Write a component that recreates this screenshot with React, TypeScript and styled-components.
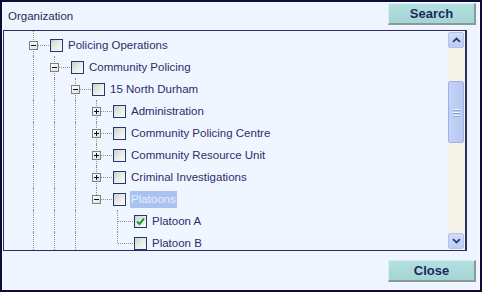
import React from 'react';
import styled, { createGlobalStyle, css } from 'styled-components';

const GlobalStyle = createGlobalStyle`
	html, body {
		margin: 0;
		padding: 0;
		background: #eef5fe;
	}
	body {
		font-family: "Liberation Sans", Arial, sans-serif;
	}
`;

const ROW_H = 22;
const INDENT = 21;
const LINE = '#8e8e8e';

interface INode {
	label: string;
	level: number;
	hasNext: boolean;
	state: 'open' | 'closed' | 'leaf';
	checked?: boolean;
	selected?: boolean;
	guides: boolean[];
}

const nodes: INode[] = [
	{ label: 'Policing Operations', level: 0, hasNext: true, state: 'open', guides: [] },
	{ label: 'Community Policing', level: 1, hasNext: true, state: 'open', guides: [true] },
	{ label: '15 North Durham', level: 2, hasNext: true, state: 'open', guides: [true, true] },
	{ label: 'Administration', level: 3, hasNext: true, state: 'closed', guides: [true, true, true] },
	{ label: 'Community Policing Centre', level: 3, hasNext: true, state: 'closed', guides: [true, true, true] },
	{ label: 'Community Resource Unit', level: 3, hasNext: true, state: 'closed', guides: [true, true, true] },
	{ label: 'Criminal Investigations', level: 3, hasNext: true, state: 'closed', guides: [true, true, true] },
	{ label: 'Platoons', level: 3, hasNext: false, state: 'open', selected: true, guides: [true, true, true] },
	{ label: 'Platoon A', level: 4, hasNext: true, state: 'leaf', checked: true, guides: [true, true, true, false] },
	{ label: 'Platoon B', level: 4, hasNext: false, state: 'leaf', guides: [true, true, true, false] },
];

const Window = styled.div`
	box-sizing: border-box;
	width: 482px;
	height: 292px;
	border: 2px solid #0d0d33;
	box-shadow: inset 0 0 0 1px #f6f9ff;
	background: #eef5fe;
	display: flex;
	flex-direction: column;
`;

const Header = styled.div`
	height: 28px;
	display: flex;
	justify-content: space-between;
	align-items: flex-start;
	padding: 1px 4px 0 6px;
	box-sizing: border-box;
`;

const Caption = styled.span`
	align-self: center;
	font-size: 11.5px;
	color: #2b2b55;
	margin-top: -1px;
`;

const ActionButton = styled.button`
	width: 88px;
	height: 22px;
	padding: 0;
	box-sizing: border-box;
	border: none;
	border-top: 1px solid #d8f0f0;
	border-left: 1px solid #d8f0f0;
	border-right: 2px solid #8a9a9a;
	border-bottom: 2px solid #8a9a9a;
	background: linear-gradient(#b4e0e0, #a4d4d4);
	color: #1b2a5c;
	font-family: "Liberation Sans", Arial, sans-serif;
	font-weight: bold;
	font-size: 13px;
	cursor: pointer;
`;

const TreePanel = styled.div`
	margin: 0 13px 0 1px;
	height: 221px;
	box-sizing: border-box;
	border: 1px solid #2c2e62;
	border-right-width: 2px;
	background: #eff6ff;
	display: flex;
	overflow: hidden;
`;

const TreeArea = styled.div`
	flex: 1;
	overflow: hidden;
	padding: 3px 0 0 19px;
`;

const Row = styled.div`
	display: flex;
	align-items: center;
	height: ${ROW_H}px;
	white-space: nowrap;
`;

const vLine = css`
	content: '';
	position: absolute;
	left: 10px;
	width: 0;
	border-left: 1px dotted ${LINE};
`;

const GuideCell = styled.div<{ $line: boolean; $first: boolean }>`
	position: relative;
	width: ${INDENT}px;
	height: 100%;
	flex-shrink: 0;
	&::before {
		${vLine};
		top: ${(p) => (p.$first ? '-4px' : '0')};
		bottom: 0;
		display: ${(p) => (p.$line ? 'block' : 'none')};
	}
`;

const NodeCell = styled.div<{ $hasNext: boolean; $first: boolean }>`
	position: relative;
	width: ${INDENT + 6}px;
	height: 100%;
	flex-shrink: 0;
	display: flex;
	align-items: center;
	&::before {
		${vLine};
		top: ${(p) => (p.$first ? '-4px' : '0')};
		bottom: ${(p) => (p.$hasNext ? '0' : `${ROW_H / 2}px`)};
	}
	&::after {
		content: '';
		position: absolute;
		left: 11px;
		right: 1px;
		top: ${ROW_H / 2}px;
		border-top: 1px dotted ${LINE};
	}
`;

const Expander = styled.span`
	position: relative;
	z-index: 1;
	margin-left: 6px;
	margin-top: 1px;
	width: 9px;
	height: 9px;
	box-sizing: border-box;
	border: 1px solid #7f7f7f;
	background: linear-gradient(135deg, #ffffff, #e0e0e0);
	display: flex;
	align-items: center;
	justify-content: center;
`;

const Sign = styled.span<{ $plus: boolean }>`
	position: relative;
	width: 5px;
	height: 1px;
	background: #111;
	&::after {
		content: '';
		position: absolute;
		left: 2px;
		top: -2px;
		width: 1px;
		height: 5px;
		background: #111;
		display: ${(p) => (p.$plus ? 'block' : 'none')};
	}
`;

const Check = styled.span`
	width: 13px;
	height: 13px;
	box-sizing: border-box;
	flex-shrink: 0;
	border: 1px solid #1f3a6e;
	background: linear-gradient(135deg, #cfcfca, #e8e8e4 45%, #fbfbfb);
	display: flex;
	align-items: center;
	justify-content: center;
`;

const Label = styled.span<{ $selected?: boolean }>`
	margin-left: 4px;
	padding: 0 1px;
	line-height: 17px;
	font-size: 11.5px;
	color: ${(p) => (p.$selected ? '#e6eeff' : '#2e2c6a')};
	background: ${(p) => (p.$selected ? '#a9c2ef' : 'transparent')};
`;

const Scrollbar = styled.div`
	width: 16px;
	display: flex;
	flex-direction: column;
	padding: 1px 1px 1px 0;
	background: #f6f4ea;
`;

const ScrollButton = styled.div`
	height: 16px;
	flex-shrink: 0;
	box-sizing: border-box;
	border: 1px solid #b2c2ea;
	border-radius: 2px;
	background: linear-gradient(#d2def8, #bccdf2);
	display: flex;
	align-items: center;
	justify-content: center;
`;

const Track = styled.div`
	flex: 1;
	display: flex;
	flex-direction: column;
	padding-top: 33px;
`;

const Thumb = styled.div`
	height: 62px;
	box-sizing: border-box;
	border: 1px solid #9fb2e6;
	border-radius: 2px;
	background: linear-gradient(90deg, #c4d3f6, #b6c8f2);
	display: flex;
	flex-direction: column;
	align-items: center;
	justify-content: center;
	gap: 2px;
`;

const Grip = styled.span`
	width: 7px;
	height: 1px;
	background: #eef3ff;
	box-shadow: 0 1px 0 #8ea3d8;
`;

const Footer = styled.div`
	flex: 1;
	display: flex;
	justify-content: flex-end;
	align-items: flex-start;
	padding: 9px 4px 0 0;
`;

const Arrow: React.FC<{ down?: boolean }> = ({ down }) => (
	<svg width="9" height="6" viewBox="0 0 9 6">
		<path
			d={down ? 'M1 1.2 L4.5 4.5 L8 1.2' : 'M1 4.8 L4.5 1.5 L8 4.8'}
			fill="none"
			stroke="#2a3f78"
			strokeWidth="1.8"
		/>
	</svg>
);

const Tick = () => (
	<svg width="11" height="11" viewBox="0 0 11 11">
		<path d="M2 5.5 L4.5 8 L9 2.5" fill="none" stroke="#1f9a2e" strokeWidth="2" />
	</svg>
);

const App: React.FC = () => {
	return (
		<>
			<GlobalStyle />
			<Window>
				<Header>
					<Caption>Organization</Caption>
					<ActionButton>Search</ActionButton>
				</Header>
				<TreePanel>
					<TreeArea>
						{nodes.map((n, i) => (
							<Row key={n.label}>
								{n.guides.map((g, j) => (
									<GuideCell key={j} $line={g} $first={i === 0} />
								))}
								<NodeCell $hasNext={n.hasNext} $first={i === 0}>
									{n.state !== 'leaf' && (
										<Expander>
											<Sign $plus={n.state === 'closed'} />
										</Expander>
									)}
								</NodeCell>
								<Check>{n.checked && <Tick />}</Check>
								<Label $selected={n.selected}>{n.label}</Label>
							</Row>
						))}
					</TreeArea>
					<Scrollbar>
						<ScrollButton>
							<Arrow />
						</ScrollButton>
						<Track>
							<Thumb>
								<Grip />
								<Grip />
								<Grip />
							</Thumb>
						</Track>
						<ScrollButton>
							<Arrow down />
						</ScrollButton>
					</Scrollbar>
				</TreePanel>
				<Footer>
					<ActionButton>Close</ActionButton>
				</Footer>
			</Window>
		</>
	);
};

export default App;
